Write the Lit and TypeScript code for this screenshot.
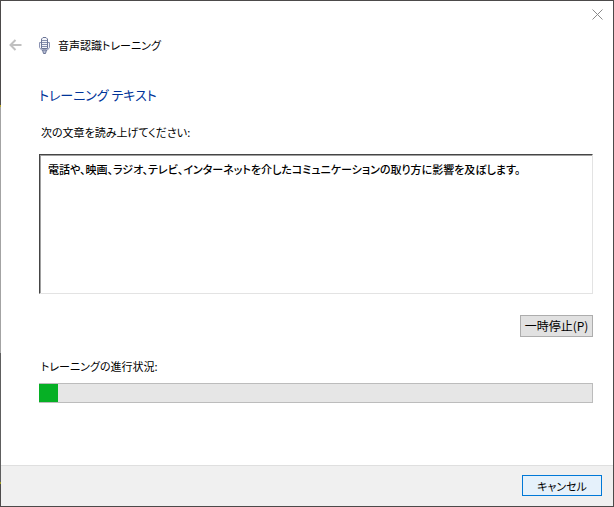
import { LitElement, html, css } from "lit";
import { customElement, property } from "lit/decorators.js";

@customElement("app-root")
export class AppRoot extends LitElement {
  @property({ type: Number }) progress = 19;
  @property() sentence =
    "電話や、映画、ラジオ、テレビ、インターネットを介したコミュニケーションの取り方に影響を及ぼします。";

  static styles = css`
    :host {
      display: block;
      font: 11px/20px "Noto Sans CJK JP", sans-serif;
      font-feature-settings: "palt";
      color: #000;
    }
    * {
      box-sizing: border-box;
    }
    .window {
      display: flex;
      flex-direction: column;
      min-height: 100vh;
      padding: 1px;
      background:
        linear-gradient(
            #4c4a4a 105px, #b5a52a 105px 107px, #a3a3a3 107px 353px,
            #5e5e5e 353px 482px, #9a9a20 482px 484px, #4c4a4a 484px
          ) left / 1px 100% no-repeat,
        #4c4a4a;
    }
    .caption {
      display: flex;
      justify-content: flex-end;
      height: 28px;
      padding: 8px 10px;
      background: #fff;
    }
    button {
      font: inherit;
      font-feature-settings: inherit;
      color: inherit;
      margin: 0;
      padding: 0;
    }
    .icon-button {
      display: flex;
      border: 0;
      background: none;
    }
    svg {
      display: block;
    }
    .header {
      display: flex;
      align-items: center;
      height: 32px;
      padding-left: 8px;
      background: #fff;
    }
    .mic {
      margin: 0 8px 0 17px;
    }
    h1 {
      margin: 0;
      font-size: 11px;
      font-weight: 400;
    }
    .body {
      flex: 1;
      display: flex;
      flex-direction: column;
      padding: 22px 20px 0 38px;
      background: #fff;
    }
    h2 {
      margin: 0;
      font-size: 13px;
      line-height: 24px;
      font-weight: 400;
      color: #003399;
    }
    .label {
      margin: 15px 0 12px 2px;
    }
    .passage {
      display: block;
      width: 100%;
      height: 140px;
      margin: 0;
      padding: 4px 8px;
      resize: none;
      outline: none;
      border: 1px solid;
      border-color: #454545 #e3e3e3 #e3e3e3 #454545;
      border-radius: 0;
      box-shadow: inset 1px 1px #a0a0a0;
      font: 500 11px/20px "Noto Sans CJK JP", sans-serif;
      font-feature-settings: inherit;
      color: #000;
      background: #fff;
    }
    .pause {
      align-self: flex-end;
      width: 73px;
      height: 22px;
      margin-top: 21px;
      font-size: 12px;
      line-height: 18px;
      border: 1px solid #adadad;
      background: #e1e1e1;
    }
    .progress-label {
      margin: 19px 0 7px 2px;
    }
    progress {
      appearance: none;
      display: block;
      width: 100%;
      height: 20px;
      border: 1px solid #bcbcbc;
      border-left: 0;
      background: #e6e6e6;
    }
    progress::-webkit-progress-bar {
      background: #e6e6e6;
    }
    progress::-webkit-progress-value {
      background: #06b025;
    }
    .footer {
      display: flex;
      justify-content: flex-end;
      padding: 9px 11px 10px;
      border-top: 1px solid #dfdfdf;
      background: #f0f0f0;
    }
    .cancel {
      width: 80px;
      height: 21px;
      line-height: 18px;
      border: 1px solid #0078d7;
      background: #e5f1fb;
    }
  `;

  render() {
    return html`
      <div class="window">
        <div class="caption">
          <button class="icon-button" aria-label="閉じる">
            <svg width="11" height="11" viewBox="0 0 11 11" fill="none" stroke="#8a8a8a">
              <path d="M.5 .5l10 10M10.5 .5l-10 10" />
            </svg>
          </button>
        </div>
        <div class="header">
          <button class="icon-button" aria-label="戻る" disabled>
            <svg width="13" height="12" viewBox="0 0 13 12" fill="none" stroke="#c0c0c0" stroke-width="2">
              <path d="M1.5 6H12.5M6.5 1L1.5 6l5 5" />
            </svg>
          </button>
          <svg class="mic" width="11" height="17" viewBox="0 0 11 17" fill="none" stroke="#6b7596">
            <path d="M2.500 5.500h-2v5l2 2.500h6l2-2.500v-5h-2" stroke="#8b93b3" fill="#f4f5fa" />
            <path d="M2.500 11.500V2l1.500-1.500h3L8.500 2v9.500z" fill="#f4f5fa" />
            <path d="M3 3.500h5M3 5.500h5M3 7.500h5M3 9.500h5" stroke="#8790ae" />
            <path d="M3.500 13l1 3.500h2l1-3.500z" fill="#b8bfd6" />
          </svg>
          <h1>音声認識トレーニング</h1>
        </div>
        <main class="body">
          <h2>トレーニング テキスト</h2>
          <label class="label" for="passage">次の文章を読み上げてください:</label>
          <textarea class="passage" id="passage" readonly .value=${this.sentence}></textarea>
          <button class="pause">一時停止(P)</button>
          <label class="progress-label" for="progress">トレーニングの進行状況:</label>
          <progress id="progress" max="554" .value=${this.progress}></progress>
        </main>
        <div class="footer">
          <button class="cancel">キャンセル</button>
        </div>
      </div>
    `;
  }
}
